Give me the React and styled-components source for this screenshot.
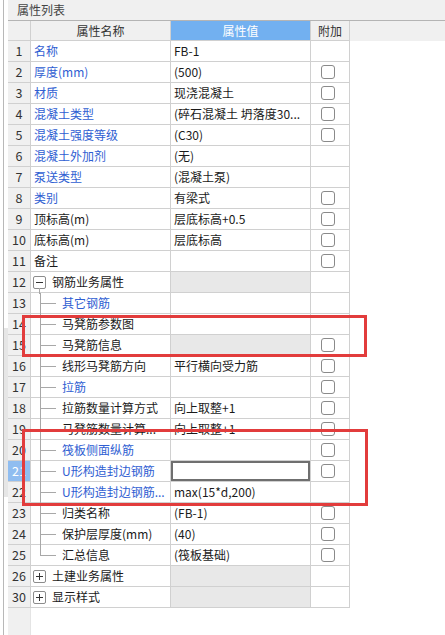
import React from 'react';
import styled, { createGlobalStyle, css } from 'styled-components';

const Global = createGlobalStyle`
  html, body { margin: 0; padding: 0; background: #fff; }
  body {
    font-family: "Noto Sans CJK SC", "Microsoft YaHei", sans-serif;
    font-size: 12px;
    color: #1a1a1a;
  }
  * { box-sizing: border-box; }
`;

const GRID = '#d0d0d0';
const BLUE = '#2f5ed2';

const Page = styled.div`
  position: relative;
  display: flex;
  width: 445px;
  height: 635px;
  overflow: hidden;
  background: #fff;
`;

const SideStrip = styled.div`
  flex: none;
  width: 8px;
  display: flex;
  flex-direction: column;
  padding-left: 3px;
  background: #fff;
`;

const SideRail = styled.div`
  flex: ${p => p.$grow || 'none'};
  height: ${p => (p.$h ? `${p.$h}px` : 'auto')};
  border-left: 1px solid #b8b8b8;
  background: ${p => p.$bg || '#fff'};
`;

const Panel = styled.div`
  flex: 1;
  display: flex;
  flex-direction: column;
  min-width: 0;
`;

const TitleBar = styled.div`
  height: 20px;
  line-height: 20px;
  padding-left: 9px;
  background: #f0f0f0;
  color: #444;
  font-size: 12px;
`;

const HeaderRow = styled.div`
  display: flex;
  height: 21px;
  background: #f0f0f0;
  border-top: 1px solid #b4b4b4;
`;

const HeadCell = styled.div`
  width: ${p => p.$w}px;
  height: 20px;
  line-height: 19px;
  text-align: center;
  border-right: 1px solid ${GRID};
  border-bottom: 1px solid ${GRID};
  color: ${p => (p.$active ? '#fff' : '#333')};
  background: ${p => (p.$active ? '#72b0f0' : '#f0f0f0')};
`;

const Body = styled.div`
  flex: 1;
  display: flex;
  flex-direction: column;
`;

const Row = styled.div`
  display: flex;
  height: 21px;
  width: 342px;
  flex: none;
`;

const cellBase = css`
  height: 21px;
  border-right: 1px solid ${GRID};
  border-bottom: 1px solid ${GRID};
  display: flex;
  align-items: center;
  white-space: nowrap;
  overflow: hidden;
  line-height: 20px;
`;

const NumCell = styled.div`
  ${cellBase}
  width: 23px;
  justify-content: center;
  background: ${p => (p.$selected ? '#90bdf0' : '#f0f0f0')};
  color: ${p => (p.$selected ? '#fff' : '#333')};
  font-size: 12.5px;
`;

const NameCell = styled.div`
  ${cellBase}
  width: 140px;
  padding-left: ${p => (p.$group ? 2 : 3)}px;
  color: ${p => (p.$blue ? BLUE : '#1a1a1a')};
  overflow: visible;
`;

const ValueCell = styled.div`
  ${cellBase}
  width: 140px;
  padding-left: 3px;
  background: ${p => (p.$gray ? '#e8e8e8' : '#fff')};
  ${p => p.$editing && css`box-shadow: inset 0 0 0 2px #6f6f6f;`}
`;

const AppendCell = styled.div`
  ${cellBase}
  width: 39px;
  padding-left: 10px;
`;

const Check = styled.span`
  width: 14px;
  height: 14px;
  border: 1px solid #8a8a8a;
  border-radius: 3px;
  background: #fff;
`;

const Toggle = styled.span`
  position: relative;
  flex: none;
  width: 13px;
  height: 13px;
  margin-right: 6px;
  border: 1px solid #8c8c8c;
  border-radius: 2px;
  background: #fff;
  display: flex;
  align-items: center;
  justify-content: center;
  &::before {
    content: '';
    position: absolute;
    left: 2px;
    right: 2px;
    top: 5px;
    height: 1px;
    background: #333;
  }
  ${p => !p.$open && css`
    &::after {
      content: '';
      position: absolute;
      top: 2px;
      bottom: 2px;
      left: 5px;
      width: 1px;
      background: #333;
    }
  `}
  ${p => p.$open && css`
    &::after {
      content: '';
      position: absolute;
      top: 100%;
      left: 5px;
      width: 1px;
      height: 6px;
      background: #a8a8a8;
    }
  `}
`;

const Branch = styled.span`
  position: relative;
  flex: none;
  width: 28px;
  height: 21px;
  align-self: flex-start;
  &::before {
    content: '';
    position: absolute;
    left: 6px;
    top: 0;
    width: 1px;
    height: ${p => (p.$last ? '10px' : '22px')};
    background: #a8a8a8;
  }
  &::after {
    content: '';
    position: absolute;
    left: 6px;
    top: 10px;
    width: 16px;
    height: 1px;
    background: #a8a8a8;
  }
`;

const Label = styled.span`
  overflow: hidden;
  text-overflow: clip;
`;

const Filler = styled.div`
  flex: 1;
  display: flex;
`;

const FillerNum = styled.div`
  width: 23px;
  background: #f0f0f0;
  border-right: 1px solid #e4e4e4;
`;

const Highlight = styled.div`
  position: absolute;
  left: ${p => p.$x}px;
  top: ${p => p.$y}px;
  width: ${p => p.$w}px;
  height: ${p => p.$h}px;
  border: 3px solid #e23c3c;
  pointer-events: none;
`;

const rows = [
  { n: 1, name: '名称', blue: true, value: 'FB-1' },
  { n: 2, name: '厚度(mm)', blue: true, value: '(500)', check: true },
  { n: 3, name: '材质', blue: true, value: '现浇混凝土', check: true },
  { n: 4, name: '混凝土类型', blue: true, value: '(碎石混凝土 坍落度30...', check: true },
  { n: 5, name: '混凝土强度等级', blue: true, value: '(C30)', check: true },
  { n: 6, name: '混凝土外加剂', blue: true, value: '(无)' },
  { n: 7, name: '泵送类型', blue: true, value: '(混凝土泵)' },
  { n: 8, name: '类别', blue: true, value: '有梁式', check: true },
  { n: 9, name: '顶标高(m)', value: '层底标高+0.5', check: true },
  { n: 10, name: '底标高(m)', value: '层底标高', check: true },
  { n: 11, name: '备注', value: '', check: true },
  { n: 12, name: '钢筋业务属性', group: 'open', gray: true },
  { n: 13, name: '其它钢筋', blue: true, child: true },
  { n: 14, name: '马凳筋参数图', child: true },
  { n: 15, name: '马凳筋信息', child: true, gray: true, check: true },
  { n: 16, name: '线形马凳筋方向', child: true, value: '平行横向受力筋', check: true },
  { n: 17, name: '拉筋', blue: true, child: true, check: true },
  { n: 18, name: '拉筋数量计算方式', child: true, value: '向上取整+1', check: true },
  { n: 19, name: '马凳筋数量计算...', child: true, value: '向上取整+1', check: true },
  { n: 20, name: '筏板侧面纵筋', blue: true, child: true, check: true },
  { n: 21, name: 'U形构造封边钢筋', blue: true, child: true, editing: true, selected: true, check: true },
  { n: 22, name: 'U形构造封边钢筋...', blue: true, child: true, value: 'max(15*d,200)' },
  { n: 23, name: '归类名称', child: true, value: '(FB-1)', check: true },
  { n: 24, name: '保护层厚度(mm)', child: true, value: '(40)', check: true },
  { n: 25, name: '汇总信息', child: true, last: true, value: '(筏板基础)', check: true },
  { n: 26, name: '土建业务属性', group: 'closed', gray: true },
  { n: 30, name: '显示样式', group: 'closed', gray: true },
];

export default function App() {
  return (
    <>
      <Global />
      <Page>
        <SideStrip>
          <SideRail $h={328} />
          <SideRail $h={169} $bg="#e6e6e6" />
          <SideRail $grow={1} />
        </SideStrip>
        <Panel>
          <TitleBar>属性列表</TitleBar>
          <HeaderRow>
            <HeadCell $w={23} />
            <HeadCell $w={140}>属性名称</HeadCell>
            <HeadCell $w={140} $active>属性值</HeadCell>
            <HeadCell $w={39}>附加</HeadCell>
          </HeaderRow>
          <Body>
            {rows.map(r => (
              <Row key={r.n}>
                <NumCell $selected={r.selected}>{r.n}</NumCell>
                <NameCell $blue={r.blue} $group={!!r.group}>
                  {r.group && <Toggle $open={r.group === 'open'} />}
                  {r.child && <Branch $last={r.last} />}
                  <Label>{r.name}</Label>
                </NameCell>
                <ValueCell $gray={r.gray} $editing={r.editing}>
                  {r.value}
                </ValueCell>
                <AppendCell>{r.check && <Check />}</AppendCell>
              </Row>
            ))}
            <Filler>
              <FillerNum />
            </Filler>
          </Body>
        </Panel>
        <Highlight $x={22} $y={315} $w={345} $h={42} />
        <Highlight $x={22} $y={429} $w={346} $h={77} />
      </Page>
    </>
  );
}
